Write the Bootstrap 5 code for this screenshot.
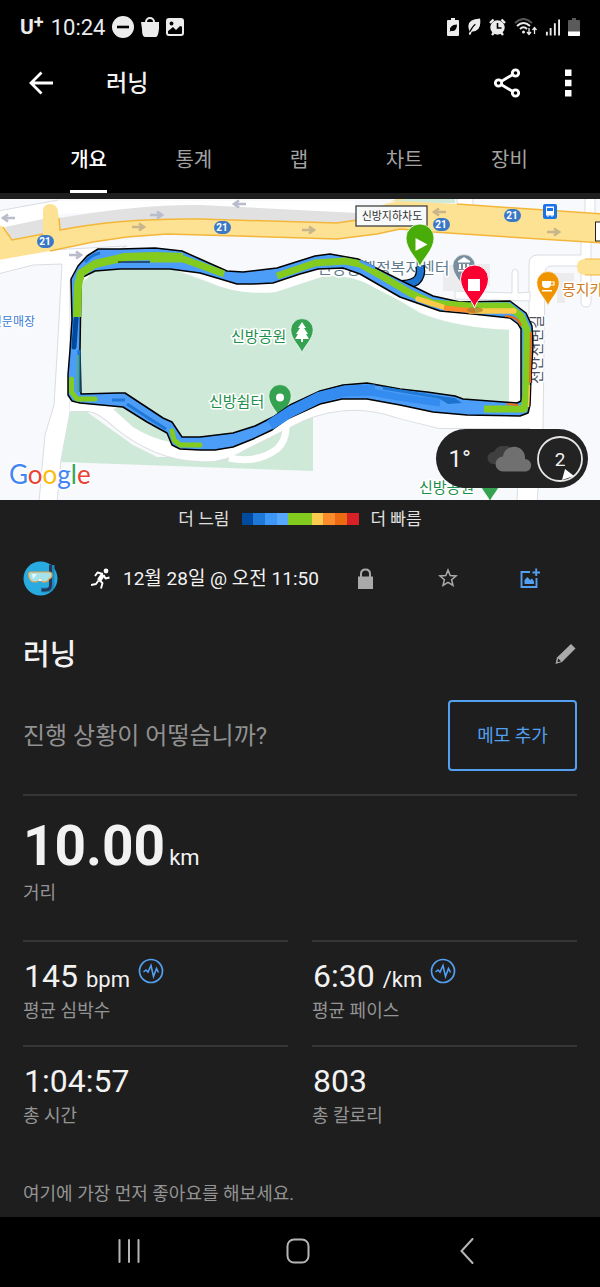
<!DOCTYPE html>
<html lang="ko">
<head>
<meta charset="utf-8">
<meta name="viewport" content="width=device-width, initial-scale=1">
<title>러닝</title>
<link href="https://cdn.jsdelivr.net/npm/bootstrap@5.3.0/dist/css/bootstrap.min.css" rel="stylesheet">
<style>
  body { font-family: Roboto, "Noto Sans CJK KR", sans-serif; background: #1e1e1e; color: #f2f2f2; }
  svg { display: block; flex: none; }
  a { color: inherit; text-decoration: none; }
  .plain { background: none; border: 0; padding: 0; color: inherit; }
  .topbar { background: #000; border-bottom: 6px solid #1e1e1e; }
  .status { height: 54px; padding: 0 20px; font-size: 22px; color: #ececec; }
  .status-left { gap: 7px; }
  .status-right { gap: 8px; }
  .carrier { font-weight: 700; font-size: 21px; line-height: 24px; }
  .carrier sup { font-size: 18px; top: -6px; }
  .appbar { height: 58px; padding: 0 28px; }
  .appbar h1 { font-size: 23px; font-weight: 500; margin: 0 0 0 52px; padding-top: 2px; }
  .more { margin-left: 44px; }
  .tabs { height: 81px; padding: 0 38px 0 36px; }
  .tabs a { color: #a3a3a3; font-size: 20px; line-height: 24px; padding: 36px 0 18px; border-bottom: 3px solid transparent; }
  .tabs a.active { color: #fff; border-color: #fff; font-weight: 500; }
  .map text { font-family: Roboto, "Noto Sans CJK KR", sans-serif; }
  .map .logo { font-family: Lato, sans-serif; }
  .halo { paint-order: stroke; stroke: #fff; stroke-width: 3px; stroke-linejoin: round; }
  .pill { right: 12px; bottom: 12px; height: 59px; background: #232323; padding: 0 5px 0 13px; font-size: 24px; }
  .legend { height: 38px; font-size: 17px; gap: 12px; color: #e0e0e0; }
  .legend span { padding-top: 2px; }
  .swatch { width: 117px; height: 12px; }
  .swatch i { flex: 1 1 0; }
  .content { padding: 0 23px; }
  .meta { height: 80px; font-size: 19px; }
  .meta .runner { margin-left: 33px; }
  .meta .when { margin-left: 13px; padding-top: 2px; }
  .meta .lock { margin-left: 38px; }
  .meta .star { margin-left: 64px; }
  .meta .photo { margin-right: 37px; }
  .titlerow { height: 72px; }
  .titlerow h2 { font-size: 29px; font-weight: 500; margin: 0; padding-top: 2px; }
  .note { height: 81px; padding-top: 10px; font-size: 24px; color: #919191; }
  .btn-memo { --bs-btn-color: #539ff0; --bs-btn-border-color: #539ff0; --bs-btn-border-radius: 4px; --bs-btn-hover-color: #fff; --bs-btn-hover-bg: #539ff0; font-size: 18px; width: 129px; height: 71px; border-width: 2px; }
  .ruled { border-top: 2px solid #363636; }
  .total { margin-top: 23px; height: 146px; padding-top: 16px; }
  .total strong { font-size: 55px; line-height: 68px; font-weight: 700; }
  .unit { font-size: 22px; }
  .label { font-size: 18px; line-height: 26px; color: #949494; }
  .stats { column-gap: 24px; display: grid; grid-template-columns: 1fr 1fr; }
  .stat { height: 105px; padding-top: 14px; }
  .num { font-size: 32px; line-height: 40px; height: 42px; padding-left: 1px; }
  .num svg { margin-top: 2px; }
  .first { height: 67px; padding-top: 31px; font-size: 18px; line-height: 26px; color: #949494; }
  .sysnav { background: #000; height: 70px; color: #b5b5b5; padding: 0 48px 2px 44px; }
</style>
</head>
<body>
<header class="topbar">
  <div class="status d-flex align-items-center justify-content-between">
    <div class="status-left d-flex align-items-center">
      <span class="carrier">U<sup>+</sup></span>
      <span>10:24</span>
      <svg width="22" height="22" viewBox="0 0 22 22"><circle cx="11" cy="11" r="11" fill="#ececec"/><path d="M5 11h12" stroke="#000" stroke-width="2.6"/></svg>
      <svg width="18" height="20" viewBox="0 0 18 20"><path d="M0 5h18v7q-1 8-3 8H4q-3 0-3-8z" fill="#ececec"/><path d="M5 7V5a4 4 0 0 1 8 0v2" fill="none" stroke="#ececec" stroke-width="2"/></svg>
      <svg width="18" height="18" viewBox="0 0 18 18"><rect x="1" y="1" width="16" height="16" rx="2" fill="#000" stroke="#ececec" stroke-width="2"/><path d="M1 1h16v8l-3-1-4 4-3-3-6 5z" fill="#ececec"/><circle cx="5.500" cy="5.500" r="1.900" fill="#000"/></svg>
    </div>
    <div class="status-right d-flex align-items-center">
      <svg width="12" height="18" viewBox="0 0 12 18"><path d="M4 0h4v2h3q1 0 1 1v14q0 1-1 1H1q-1 0-1-1V3q0-1 1-1h3z" fill="#ececec"/><path d="M3 13q-1-6 7-6.500Q10 14 4 13l-2 1 4-3.500z" fill="#000"/></svg>
      <svg width="14" height="18" viewBox="0 0 15 18"><path d="M14 0q2 14-9 14l-1 3q-2 1-2-1l1-2Q-3 1 14 0z" fill="#ececec"/><path d="M3 14q3-6 6-8" stroke="#000" stroke-width="1.200" fill="none"/></svg>
      <svg width="17" height="18" viewBox="0 0 17 18"><circle cx="8.500" cy="9.500" r="7.200" fill="#ececec"/><path d="M8.500 5v5h4" fill="none" stroke="#000" stroke-width="1.600"/><path d="M1 5l3.500-3.500M16 5l-3.500-3.500M3 17l2-2.500M14 17l-2-2.500" stroke="#ececec" stroke-width="2.400"/></svg>
      <svg width="23" height="18" viewBox="0 0 23 18" fill="none"><path d="M1 5q8.500-8 17 0" stroke="#555" stroke-width="2"/><path d="M3 8q6.500-6 13 0M6 11q3.500-3.500 7 0" stroke="#ececec" stroke-width="2"/><circle cx="9.500" cy="14" r="1.500" fill="#ececec"/><path d="M15 10v6m-2-2l2 2.500 2-2.500M20.500 16v-6m-2 2l2-2.500 2 2.500" stroke="#ececec" stroke-width="1.300"/></svg>
      <svg width="15" height="18" viewBox="0 0 16 18"><path d="M1 18v-4h2v4zM5 18v-8h2v8zM9.500 18V5h2v13zM14 18V1h2v17z" fill="#ececec"/></svg>
      <svg width="12" height="18" viewBox="0 0 12 18"><path d="M4 0h4v2h3q1 0 1 1v15H0V3q0-1 1-1h3z" fill="#5a5a5a"/><path d="M0 13.500h12V17q0 1-1 1H1q-1 0-1-1z" fill="#fff"/></svg>
    </div>
  </div>
  <div class="appbar d-flex align-items-center">
    <a href="#" aria-label="뒤로"><svg width="26" height="24" viewBox="0 0 26 24" fill="none" stroke="#fff" stroke-width="2.800"><path d="M25 12H3M13.500 1.500L3 12l10.500 10.500"/></svg></a>
    <h1>러닝</h1>
    <button class="plain ms-auto" aria-label="공유"><svg width="28" height="30" viewBox="0 0 28 30" fill="none" stroke="#fff" stroke-width="2.800"><circle cx="5.500" cy="15" r="3.200"/><circle cx="22.500" cy="5" r="3.200"/><circle cx="22.500" cy="25" r="3.200"/><path d="M8.500 13.200l11-6.500M8.500 16.800l11 6.500"/></svg></button>
    <button class="plain more" aria-label="더보기"><svg width="7" height="28" viewBox="0 0 7 28" fill="#fff"><path d="M0 0.500h6.500v6.500H0zM0 10.800h6.500v6.500H0zM0 21h6.500v6.500H0z"/></svg></button>
  </div>
  <nav class="tabs row g-0 text-center">
    <div class="col"><a class="active d-inline-block" href="#">개요</a></div>
    <div class="col"><a class="d-inline-block" href="#">통계</a></div>
    <div class="col"><a class="d-inline-block" href="#">랩</a></div>
    <div class="col"><a class="d-inline-block" href="#">차트</a></div>
    <div class="col"><a class="d-inline-block" href="#">장비</a></div>
  </nav>
</header>

<main>
  <div class="map position-relative">
    <svg class="w-100 h-auto" viewBox="0 199 600 301">
      <defs>
        <g id="arr" fill="none" stroke-width="2.600"><path d="M-6 0H5M1-3.500L6 0 1 3.500"/></g>
        <path id="drop" d="M0 0C-2-8-14-17-14-29a14 14 0 0 1 28 0C14-17 2-8 0 0z"/>
      </defs>
      <rect y="199" width="600" height="301" fill="#f7f9fc"/>
      <!-- side streets -->
      <g fill="#fff" stroke="#dadde2" stroke-width="1">
        <path d="M-2 211L58 201H102L355 201V213L200 206L60 214L-2 232z" stroke="none"/>
        <path d="M-2 211L58 200" fill="none"/>
        <path d="M-2 258L50 250 127 246 90 262V280H70V412L61 460 57 502H39L45 435 54 405 57 356 62 264 33 265-2 274z"/>
        <path d="M457 198h16v8h-16zM585 198h10v18h-10z"/>
        <path d="M529 310V264q0-9 9-9h43v-14h10v60q0 6-5 6t-5-6v-35h-29q-7 0-7 7L543 430 537 502H517L520 440 524 410z"/>
        <path d="M455 291l57 2v-20q0-4 3-4t3 4v20l12-1v9l-75-2z"/>
      </g>
      <path d="M395 199h60v4l-60 1z" fill="#cfe9d8"/>
      <g fill="#ececef"><path d="M443 265h22v26h-22zM470 264h20v22h-20zM551 273h23v12h-9v18h-8v-12h-6z"/></g>
      <!-- park -->
      <path d="M81 285L95 270H175L208 282Q240 297 280 290L320 277Q350 273 372 284L420 313Q455 328 513 329L509 406 467 404 400 395 345 390 310 400 270 422 233 440 182 440 165 426 125 400 80 397z" fill="#cfe9d8"/>
      <path d="M70 412H87L133 445 157 457 230 457 313 415V471L61 462z" fill="#cfe9d8"/>
      <path d="M70 403H90Q103 405 120 421Q158 452 200 453Q222 455 242 442L300 413Q350 392 400 410L440 420H530" fill="none" stroke="#dcdfe2" stroke-width="18"/>
      <path d="M70 403H90Q103 405 120 421Q158 452 200 453Q222 455 242 442L300 413Q350 392 400 410L440 420H530" fill="none" stroke="#fff" stroke-width="16"/>
      <path d="M113 409L133 427Q150 438 170 442L166 430 124 406z" fill="#cfe9d8"/>
      <path d="M286 424Q287 440 277 449Q257 464 229 458" fill="none" stroke="#fff" stroke-width="7"/>
      <path d="M195 266Q233 290 275 285L320 270Q350 266 375 280L430 308Q465 322 516 323V408" fill="none" stroke="#fff" stroke-width="14"/>
      <!-- national road 21 -->
      <path d="M5 227L43 219V235L12 240zM59 218Q143 204 200 205L357 213V220L337 223 200 219Q130 217 60 230z" fill="#e1e1e1"/>
      <path d="M-2 224L3 227 12 240 43 234V212q0-8 7-8t8 8L60 230Q120 218 200 219L337 223 357 220 385 204 400 201 457 204 602 214V243L433 232 400 229 377 234 337 239 167 234 127 237 93 242 50 251-2 260z" fill="#fde293"/>
      <path d="M3 227L12 240 43 234M59 218L60 230Q120 218 200 219L337 223 357 220M457 204L602 214M602 243L433 232 400 229 377 234 337 239 167 234 127 237 93 242 50 251" fill="none" stroke="#f4b63a" stroke-width="1.500"/>
      <path d="M390 202q6-4 16-3M602 259h-17q-8 0-8 8t8 8h17z" fill="#fde293"/><path d="M602 259h-17M585 275h17" stroke="#f4b63a"/>
      <g stroke="#b8bccb"><use href="#arr" transform="translate(9 218) rotate(180)"/><use href="#arr" transform="translate(156 215)"/><use href="#arr" transform="translate(240 204) rotate(180)"/><use href="#arr" transform="translate(75 255)"/></g>
      <g stroke="#c9b58c"><use href="#arr" transform="translate(138 227)"/><use href="#arr" transform="translate(308 230)"/><use href="#arr" transform="translate(440 212) rotate(180)"/><use href="#arr" transform="translate(553 232)"/></g>
      <g fill="#3b78c6"><rect x="37" y="235" width="17" height="13" rx="6.500"/><rect x="214" y="221" width="17" height="13" rx="6.500"/><rect x="433" y="218" width="17" height="13" rx="6.500"/><rect x="504" y="209" width="17" height="13" rx="6.500"/></g>
      <g fill="#fff" font-size="10" font-weight="700" text-anchor="middle"><text x="45" y="245">21</text><text x="222" y="231">21</text><text x="441" y="228">21</text><text x="512" y="219">21</text></g>
      <rect x="543" y="204" width="14" height="15" rx="2" fill="#1a73e8"/>
      <path d="M546 206.500h8v9h-1.500v1.500h-1v-1.500h-3v1.500h-1v-1.500H546zM547 208v3h6v-3z" fill="#fff" fill-rule="evenodd"/>
      <rect x="356" y="206" width="71" height="20" fill="#f8f9fa" stroke="#333" stroke-width="1.200"/>
      <text x="392" y="220" font-size="11" text-anchor="middle" fill="#333">신방지하차도</text>
      <rect x="595.500" y="222" width="8" height="19" fill="#fff" stroke="#222"/>

      <!-- places -->
      <g font-size="15">
        <text class="halo" x="317" y="274" font-size="16" fill="#5f7c8e">신방동행정복지센터</text>
        <text class="halo" x="562" y="295" fill="#cf7c22">몽지카</text>
        <text class="halo" x="35" y="326" font-size="12" text-anchor="end" fill="#3a7bd5">전문매장</text>
        <text class="halo" x="231" y="342" fill="#1d8f4c">신방공원</text>
        <text class="halo" x="209" y="407" fill="#1d8f4c">신방쉼터</text>
        <text class="halo" x="419" y="493" fill="#1d8f4c">신방공원</text>
        <text class="halo" transform="translate(542 384) rotate(-90)" fill="#4c5262">천안천변길</text>
      </g>
      <g stroke="#fff" stroke-width=".8">
        <use href="#drop" transform="translate(464 289) scale(.8)" fill="#7a8f9d"/>
        <use href="#drop" transform="translate(302 353) scale(.8)" fill="#34a250"/>
        <use href="#drop" transform="translate(280 419) scale(.8)" fill="#34a250"/>
        <use href="#drop" transform="translate(490 502) scale(.8)" fill="#34a250"/>
        <use href="#drop" transform="translate(548 306) scale(.8)" fill="#f09300"/>
      </g>
      <path d="M458 261l6-4 6 4v1.500h-12zM459 264h2v5h-2zM463 264h2v5h-2zM467 264h2v5h-2zM458 270h12v1.500h-12z" fill="#fff"/>
      <path d="M302 322l4 6h-2l4 6h-2l3 5h-6v3h-2v-3h-6l3-5h-2l4-6h-2z" fill="#fff"/>
      <circle cx="280" cy="397.500" r="4" fill="#fff"/>
      <path d="M542 281h9v3q0 4-4 4h-1q-4 0-4-4zM542 290h10v1.500h-10z" fill="#fff"/><path d="M551 282h3v3h-3" fill="none" stroke="#fff" stroke-width="1.200"/>

      <!-- run track, coloured by pace -->
      <path d="M420 266q2 10-4 15-6 4-20 4" fill="none" stroke="#000" stroke-width="9.500"/>
      <path d="M420 266q2 10-4 15-6 4-20 4" fill="none" stroke="#1d74d0" stroke-width="7"/>
      <path fill="#4c9df8" fill-rule="evenodd" stroke="#000" stroke-width="1.500" stroke-linejoin="round" d="M70 350L68 375V395L72 401 80 403 123 407 147 422 167 433 172 445 180 449 200 450 215 450 233 447 253 439 272 430 287 419 320 404 342 399 367 399 400 405 433 412 467 415 520 416 528 413 530 405 531 377 533 346 532 326 526 313 510 301 460 302 433 296 400 280 358 259 330 254 315 256 277 268 243 272 227 271 200 259 182 251 155 248 120 249 98 249 87 256 78 266 71 279 72 320zM80 350L81 284 83 277 95 271 120 269H170L200 273 217 278 237 284 253 284 273 283 300 274 318 269 343 268 360 274 400 297 417 303 440 311 473 314 510 318 518 324 521 329V401L517 403 463 399 455 396 427 392 400 389 367 383 343 385 320 391 290 405 273 417 255 426 233 433 200 437 182 437 172 422 163 418 125 393 117 393 81 394z"/>
      <g fill="none" stroke-linejoin="round">
        <path d="M85 262Q91 255 100 253M77 317L74 346M79 392V350" stroke="#1d74d0" stroke-width="3"/>
        <path d="M76 319L74 347" stroke="#004b9f" stroke-width="5" stroke-linecap="round"/>
        <path d="M127 404L150 419 166 429M112 400H125" stroke="#2179d6" stroke-width="3"/>
        <path d="M270 425L290 412 320 397 345 391 375 390" stroke="#348bf0" stroke-width="11"/>
        <path d="M360 390L398 397 440 403" stroke="#348bf0" stroke-width="7"/>
        <path d="M383 388L425 395 455 400" stroke="#2179d6" stroke-width="3"/>
        <path d="M435 396L455 398 462 403 448 404z" fill="#1d74d0"/>
        <path d="M77 317L78 285 81 273 95 264 125 257 155 256 183 257" stroke="#83cb1e" stroke-width="8"/>
        <path d="M150 259H183L200 265 224 274" stroke="#83cb1e" stroke-width="7"/>
        <path d="M118 262L150 262" stroke="#000" stroke-width="1"/>
        <path d="M277 276L315 263 345 261 360 264 385 278 410 293 432 303 470 306 508 306 521 316 527 330 526 395 524 409H484" stroke="#83cb1e" stroke-width="7"/>
        <path d="M78 355V392" stroke="#5fb84a" stroke-width="1.500"/>
        <path d="M71.500 379V392L77 399H95M172 431L174 440 180 445H200" stroke="#83cb1e" stroke-width="5" stroke-linecap="round"/>
        <path d="M418 299L443 307M470 311H514" stroke="#fbca4a" stroke-width="5.500" stroke-linecap="round"/>
        <path d="M444 308L475 311" stroke="#fb8c2b" stroke-width="5"/>
        <path d="M505 316Q519 317 521 326M531 332L530 383M507 404L518 405" stroke="#ec6a11" stroke-width="2"/>
        <path d="M529.500 385L528.500 407" stroke="#fbca4a" stroke-width="1.500"/>
        <path d="M360 261L375 268" stroke="#4c9df8" stroke-width="3"/>
      </g>
      <ellipse cx="475" cy="310" rx="8" ry="3" fill="#9a7430" opacity=".6"/>
      <use href="#drop" transform="translate(420 267)" fill="#48ad08" stroke="#fff" stroke-width=".8"/>
      <path d="M415.500 238v13l12-6.500z" fill="#fff"/>
      <use href="#drop" transform="translate(474.500 308)" fill="#fa0032" stroke="#fff" stroke-width="1"/>
      <rect x="468" y="279" width="12" height="12" fill="#fff"/>
      <text class="halo logo" x="9" y="484" font-size="26"><tspan fill="#4285f4">G</tspan><tspan fill="#ea4335">o</tspan><tspan fill="#fbbc05">o</tspan><tspan fill="#4285f4">g</tspan><tspan fill="#34a853">l</tspan><tspan fill="#ea4335">e</tspan></text>
    </svg>
    <div class="pill position-absolute rounded-pill d-flex align-items-center">
      <span>1°</span>
      <svg class="ms-3" width="46" height="26" viewBox="0 0 46 26"><path d="M6 18A6 6 0 0 1 7 6 11 11 0 0 1 27 6V18z" fill="#3f3f3f"/><path d="M16 25.500a7.500 7.500 0 0 1 0-15A11 11 0 0 1 38 13a6.300 6.300 0 0 1 1 12.500z" fill="#707070"/></svg>
      <svg class="ms-1" width="46" height="46" viewBox="0 0 46 46"><circle cx="23" cy="23" r="22" fill="none" stroke="#e6e6e6" stroke-width="1.800"/><text x="23" y="30" font-size="19" text-anchor="middle" fill="#f2f2f2">2</text><path d="M28 33L37 40 25 44z" fill="#fff"/></svg>
    </div>
  </div>

  <div class="legend d-flex align-items-center justify-content-center">
    <span>더 느림</span>
    <div class="swatch d-flex"><i style="background:#004b9f"></i><i style="background:#1d78d8"></i><i style="background:#3f97f5"></i><i style="background:#57a7fd"></i><i style="background:#83cb1e"></i><i style="background:#83cb1e"></i><i style="background:#fbcb50"></i><i style="background:#fb8c2b"></i><i style="background:#ec6a11"></i><i style="background:#d72126"></i></div>
    <span>더 빠름</span>
  </div>

  <div class="content">
    <div class="meta d-flex align-items-center">
      <svg width="35" height="35" viewBox="0 0 35 35"><circle cx="17.500" cy="17.500" r="17" fill="#29abe2"/><path d="M29 4V24q0 5-6 5h-5" fill="none" stroke="#1b8bbd" stroke-width="5"/><path d="M27.500 4V24q0 5-5 5h-4" fill="none" stroke="#26395a" stroke-width="3"/><path d="M7 11h19q3 0 3 3t-3 4q-1 3-5 3-3 0-4-3-2 3-5 3-5 0-6-5-1-5 1-5z" fill="#a5e2ea" stroke="#f0a040" stroke-width="1.200"/><path d="M9 13h5l-4 5zM15 20l2-3 2 3z" fill="#e9fafc"/></svg>
      <svg class="runner" width="19" height="21" viewBox="0 0 19 21" fill="none" stroke="#fff" stroke-linejoin="round"><circle cx="15" cy="3" r="2.400" fill="#fff" stroke="none"/><path d="M12 6.500L8 12.500" stroke-width="4.500"/><path d="M12 6L6.500 4.500 4 8M12.500 7l2 3.500 4-1M8 12l3.500 3-1.500 5.500M7.500 12.500L5 16 0 17" stroke-width="1.900"/></svg>
      <span class="when">12월 28일 @ 오전 11:50</span>
      <button class="plain lock" aria-label="비공개"><svg width="17" height="21" viewBox="0 0 17 21"><path d="M1 8.500h15V21H1z" fill="#aaa"/><path d="M4 9V6q0-4.500 4.500-4.500T13 6v3" fill="none" stroke="#aaa" stroke-width="2"/></svg></button>
      <button class="plain star" aria-label="즐겨찾기"><svg width="20" height="20" viewBox="0 0 20 20" fill="none" stroke="#aaa" stroke-width="1.500"><path d="M10 2l2.200 5.500 5.900.4-4.500 3.800 1.400 5.700-5-3.100-5 3.100 1.400-5.700-4.500-3.800 5.900-.4z"/></svg></button>
      <button class="plain photo ms-auto" aria-label="사진 추가"><svg width="20" height="21" viewBox="0 0 20 21" fill="none" stroke="#539ff0" stroke-width="1.900"><path d="M10 4H1.500v15h15V10M12.500 4.500h7.500M16.200.500V8"/><path d="M4.500 16v-4l3-3 2.500 3 2-1.500 2 3V16z" fill="#539ff0" stroke="none"/></svg></button>
    </div>
    <div class="titlerow d-flex align-items-center justify-content-between">
      <h2>러닝</h2>
      <button class="plain" aria-label="편집"><svg width="22" height="20" viewBox="0 0 22 20"><path d="M16 0l4.500 4.500L7 18l-6.500 2L2 13.500z" fill="#aaa"/><path d="M3.200 14.500L6 17.300l-3.500 1z" fill="#1e1e1e"/></svg></button>
    </div>
    <div class="note d-flex align-items-center justify-content-between">
      <span>진행 상황이 어떻습니까?</span>
      <button class="btn btn-outline-primary btn-memo">메모 추가</button>
    </div>
    <div class="total ruled">
      <div><strong>10.00</strong> <span class="unit">km</span></div>
      <div class="label">거리</div>
    </div>
    <div class="stats">
      <div class="stat ruled">
        <div class="num d-flex align-items-baseline">145<span class="unit ms-2">bpm</span><svg class="ms-2 align-self-start" width="26" height="26" viewBox="0 0 26 26" fill="none" stroke="#539ff0"><circle cx="13" cy="13" r="11.500" stroke-width="1.700"/><path d="M5.500 14l2.500-2 2 2 3-6.500 2.500 11 3-8 2 4" stroke-width="1.600"/></svg></div>
        <div class="label">평균 심박수</div>
      </div>
      <div class="stat ruled">
        <div class="num d-flex align-items-baseline">6:30<span class="unit ms-2">/km</span><svg class="ms-2 align-self-start" width="26" height="26" viewBox="0 0 26 26" fill="none" stroke="#539ff0"><circle cx="13" cy="13" r="11.500" stroke-width="1.700"/><path d="M5.500 14l2.500-2 2 2 3-6.500 2.500 11 3-8 2 4" stroke-width="1.600"/></svg></div>
        <div class="label">평균 페이스</div>
      </div>
      <div class="stat ruled">
        <div class="num">1:04:57</div>
        <div class="label">총 시간</div>
      </div>
      <div class="stat ruled">
        <div class="num">803</div>
        <div class="label">총 칼로리</div>
      </div>
    </div>
    <p class="first mb-0">여기에 가장 먼저 좋아요를 해보세요.</p>
  </div>
</main>

<footer class="sysnav row g-0 align-items-center">
  <button class="plain col d-flex justify-content-center" aria-label="최근 앱"><svg width="24" height="26" viewBox="0 0 24 26" stroke="currentColor" stroke-width="2" stroke-linecap="round"><path d="M2.500 2v22M12 2v22M21.500 2v22"/></svg></button>
  <button class="plain col d-flex justify-content-center" aria-label="홈"><svg width="24" height="27" viewBox="0 0 24 27" fill="none" stroke="currentColor" stroke-width="2"><rect x="1.500" y="1.500" width="21" height="23" rx="6.500"/></svg></button>
  <button class="plain col d-flex justify-content-center" aria-label="뒤로 가기"><svg width="14" height="26" viewBox="0 0 14 26" fill="none" stroke="currentColor" stroke-width="2" stroke-linecap="round"><path d="M12.500 1L1.500 13l11 12"/></svg></button>
</footer>
<script src="https://cdn.jsdelivr.net/npm/bootstrap@5.3.0/dist/js/bootstrap.bundle.min.js"></script>
</body>
</html>
